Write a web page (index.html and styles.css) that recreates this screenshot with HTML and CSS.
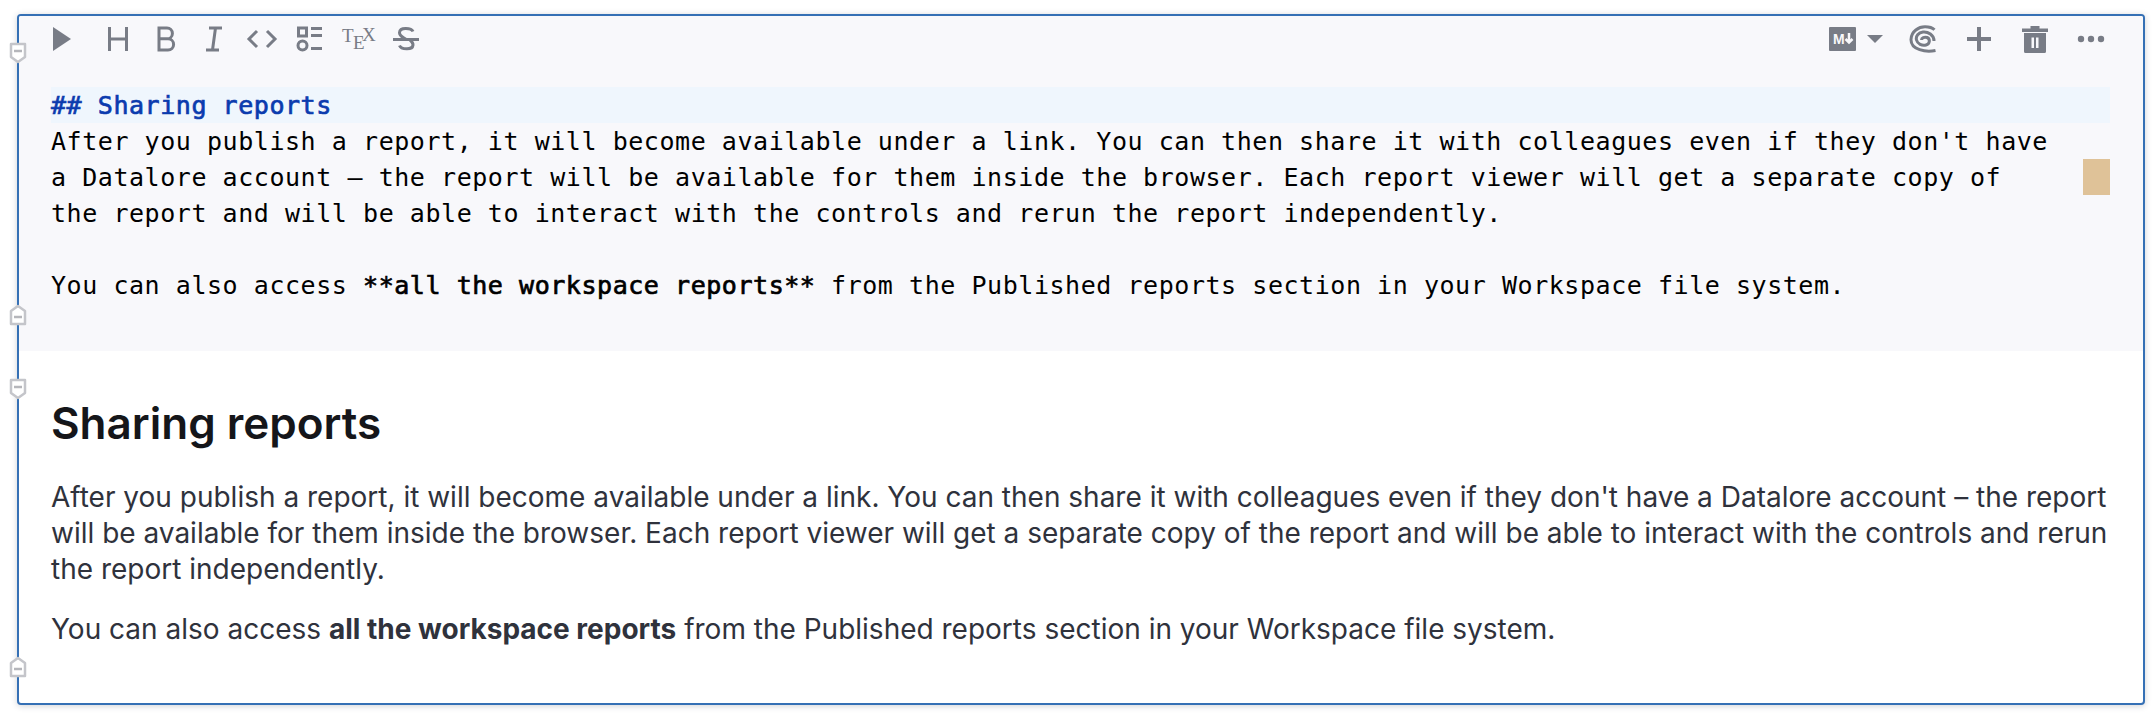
FILE: index.html
```html
<!DOCTYPE html>
<html lang="en">
<head>
<meta charset="utf-8">
<title>Sharing reports</title>
<link rel="stylesheet" href="styles.css">
</head>
<body>
<section class="cell">
  <div class="editor">
    <div class="toolbar">
      <div class="tools">
        <span class="tool tool-run"><svg width="24" height="28" viewBox="0 0 24 28"><path class="fill" d="M3 2 L21 14 L3 26 Z"/></svg></span>
        <span class="tool"><svg width="28" height="28" viewBox="0 0 28 28"><path class="line" d="M5.500 2v24M22.500 2v24M5.500 14h17"/></svg></span>
        <span class="tool"><svg width="28" height="28" viewBox="0 0 28 28"><path class="line" d="M7 3h8a5.300 5.300 0 0 1 0 10.800H7zM7 13.800h9a5.600 5.600 0 0 1 0 11.200H7z"/></svg></span>
        <span class="tool"><svg width="28" height="28" viewBox="0 0 28 28"><path class="line" d="M9 3h13M6 25h13M15.500 3L12.500 25"/></svg></span>
        <span class="tool"><svg width="32" height="28" viewBox="0 0 32 28"><path class="line" d="M11 6L3 14l8 8M21 6l8 8-8 8"/></svg></span>
        <span class="tool"><svg width="28" height="28" viewBox="0 0 28 28"><path class="line" d="M2.500 3h8v8h-8zM15 3.500h11M15 10.500h11M15 23.500h11"/><circle class="line" cx="6.500" cy="20.500" r="4.500"/></svg></span>
        <span class="tool"><svg width="36" height="28" viewBox="0 0 36 28"><text class="tex" x="2" y="17">T</text><text class="tex" x="13" y="24">E</text><text class="tex" x="22" y="16">X</text></svg></span>
        <span class="tool"><svg width="28" height="28" viewBox="0 0 28 28"><path class="line" d="M1 14.500h26M21 6.500C19.500 3 8 1.500 7.500 7.500c-.3 4 5.500 5.500 6.500 7M7.500 20.500c1.500 4 13 5 13.500 -.5 .2-2-1.200-3.500-3-5"/></svg></span>
      </div>
      <div class="tools">
        <span class="tool tool-type">
          <svg width="27" height="24" viewBox="0 0 27 24"><rect class="fill" width="27" height="24" rx="1"/><text class="md" x="4" y="17">M</text><path class="md-arrow" d="M20 6v9M16.500 12l3.500 3.500 3.500-3.500"/></svg>
          <svg width="16" height="8" viewBox="0 0 16 8"><path class="fill" d="M0 0h16L8 8z"/></svg>
        </span>
        <span class="tool tool-wide"><svg width="28" height="28" viewBox="0 0 28 28"><path class="line" d="M26.500 25.500C17 27.500 1.800 25 2 14.500 2.200 6 10 1.800 16 1.800c4 0 7.500 1 9.500 3M25 16C25 10 19 6.500 14 7 9.500 7.500 6.500 11 7.500 15 8.500 19 13 21 17 20 21 19 21.500 14 18 12.500 15.500 11.500 12.500 13 12.500 15"/></svg></span>
        <span class="tool tool-wide"><svg width="24" height="24" viewBox="0 0 24 24"><path class="fill" d="M10 0h4v10h10v4H14v10h-4V14H0v-4h10z"/></svg></span>
        <span class="tool tool-wide"><svg width="26" height="27" viewBox="0 0 26 27"><path class="fill" fill-rule="evenodd" d="M8.500 0h9v2.500H26V6H0V2.500h8.500zM2 7h22v18.500a1.500 1.500 0 0 1-1.500 1.500h-19A1.500 1.500 0 0 1 2 25.500zM9.500 11.500v10.500h2.500V11.500zM14 11.500v10.500h2.500V11.500z"/></svg></span>
        <span class="tool tool-wide"><svg width="28" height="8" viewBox="0 0 28 8"><circle class="fill" cx="4" cy="4" r="3.200"/><circle class="fill" cx="14" cy="4" r="3.200"/><circle class="fill" cx="24" cy="4" r="3.200"/></svg></span>
      </div>
    </div>
    <div class="code">
      <div class="code-line code-heading">## Sharing reports</div>
      <div class="code-line">After you publish a report, it will become available under a link. You can then share it with colleagues even if they don't have</div>
      <div class="code-line">a Datalore account – the report will be available for them inside the browser. Each report viewer will get a separate copy of<span class="change-mark"></span></div>
      <div class="code-line">the report and will be able to interact with the controls and rerun the report independently.</div>
      <div class="code-line">&nbsp;</div>
      <div class="code-line">You can also access <b>**all the workspace reports**</b> from the Published reports section in your Workspace file system.</div>
    </div>
  </div>
  <div class="prose">
    <h1>Sharing reports</h1>
    <p>After you publish a report, it will become available under a link. You can then share it with colleagues even if they don't have a Datalore account – the report will be available for them inside the browser. Each report viewer will get a separate copy of the report and will be able to interact with the controls and rerun the report independently.</p>
    <p>You can also access <b>all the workspace reports</b> from the Published reports section in your Workspace file system.</p>
  </div>
  <svg class="fold fold-1" width="18" height="22" viewBox="0 0 18 22"><path class="fold-shape" d="M2 2h14v13l-7 5-7-5z"/><path class="fold-dash" d="M5 9h8"/></svg>
  <svg class="fold fold-2" width="18" height="22" viewBox="0 0 18 22"><path class="fold-shape" d="M2 20h14V7L9 2 2 7z"/><path class="fold-dash" d="M5 13h8"/></svg>
  <svg class="fold fold-3" width="18" height="22" viewBox="0 0 18 22"><path class="fold-shape" d="M2 2h14v13l-7 5-7-5z"/><path class="fold-dash" d="M5 9h8"/></svg>
  <svg class="fold fold-4" width="18" height="22" viewBox="0 0 18 22"><path class="fold-shape" d="M2 20h14V7L9 2 2 7z"/><path class="fold-dash" d="M5 13h8"/></svg>
</section>
</body>
</html>
```
FILE: styles.css
```css
html, body { margin: 0; padding: 0; background: #fff; }
body { padding: 14px 11px 13px 17px; }

.cell {
  position: relative;
  box-sizing: border-box;
  height: 691px;
  border: 2px solid #3570b5;
  border-radius: 4px;
  box-shadow: 0 1px 6px rgba(40, 50, 70, .22);
  background: #fff;
}

.editor { background: #f8f8fb; border-radius: 2px 2px 0 0; }

.toolbar {
  display: flex;
  justify-content: space-between;
  padding: 0 24px 25px 19px;
}
.tools { display: flex; align-items: center; height: 46px; }
.tool {
  display: flex;
  align-items: center;
  justify-content: center;
  width: 48px;
  height: 46px;
}
.tool-run { margin-right: 8px; }
.tool-wide { width: 56px; }
.tool-type { width: 54px; justify-content: space-between; margin-right: 12px; }

.fill { fill: #787c86; }
.line { fill: none; stroke: #787c86; stroke-width: 3; }
.tex { font-family: "Liberation Serif", serif; font-size: 19px; fill: #787c86; }
.md { font-family: "Liberation Sans", sans-serif; font-weight: 700; font-size: 14px; fill: #f8f8fb; }
.md-arrow { fill: none; stroke: #f8f8fb; stroke-width: 2.500; }

.code {
  padding: 0 33px 48px 32px;
  font-family: "DejaVu Sans Mono", monospace;
  font-size: 25px;
  letter-spacing: .55px;
  line-height: 38px;
  color: #000;
}
.code-line { position: relative; height: 36px; white-space: pre; }
.code-line b { font-weight: 400; -webkit-text-stroke: .7px #000; }
.code-heading { background: #eff6fd; color: #0b3bae; -webkit-text-stroke: .7px #0b3bae; }
.change-mark {
  position: absolute;
  top: 0;
  right: 0;
  width: 27px;
  height: 36px;
  background: #dfc298;
}

.prose {
  padding: 44px 32px 0;
  font-family: Inter, sans-serif;
  font-size: 28px;
  line-height: 36px;
  color: #2f323c;
}
.prose h1 {
  margin: 0 0 28px;
  font-size: 44px;
  line-height: 56px;
  font-weight: 600;
  color: #15161a;
}
.prose p { margin: 0 0 24px; }
.prose b { font-weight: 700; }

.fold { position: absolute; left: -10px; }
.fold-shape { fill: #fff; stroke: #c4c5ca; stroke-width: 2.500; stroke-linejoin: round; }
.fold-dash { stroke: #b5b6bb; stroke-width: 2.500; }
.fold-1 { top: 26px; }
.fold-2 { top: 288px; }
.fold-3 { top: 362px; }
.fold-4 { top: 640px; }
```
